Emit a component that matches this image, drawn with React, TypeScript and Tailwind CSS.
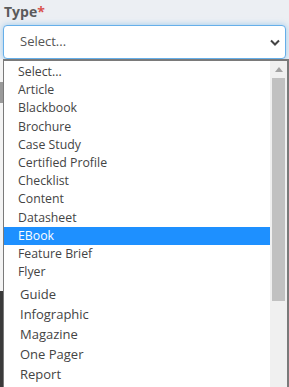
import React from 'react';

const firstGroup = [
  'Select...',
  'Article',
  'Blackbook',
  'Brochure',
  'Case Study',
  'Certified Profile',
  'Checklist',
  'Content',
  'Datasheet',
  'EBook',
  'Feature Brief',
  'Flyer',
];

const secondGroup = ['Guide', 'Infographic', 'Magazine', 'One Pager', 'Report'];

const App = () => {
  return (
    <div className="w-[289px] h-[387px] overflow-hidden bg-[#eceff3] font-['Open_Sans',sans-serif] text-[#444]">
      <div className="px-[3px] pt-[3px]">
        <div className="pl-[1px] text-[14px] font-bold leading-[18px] text-[#5b5b5b]">
          Type<span className="text-[#d9534f]">*</span>
        </div>
        <div className="mt-[4px] h-[34px] rounded-[4px] border border-[#66afe9] bg-white shadow-[0_0_6px_rgba(102,175,233,0.6)] flex items-center justify-between pl-[16px] pr-[5px]">
          <span className="text-[13px] text-[#555]">Select...</span>
          <svg width="10" height="7" viewBox="0 0 10 7" className="mt-[1px]">
            <path d="M1 1.5 L5 5.5 L9 1.5" fill="none" stroke="#444" strokeWidth="2" />
          </svg>
        </div>
      </div>

      <div className="flex">
        <div className="w-[3px] flex flex-col">
          <div className="h-[23px] bg-[#f4f4f4]" />
          <div className="h-[21px] bg-[#9a9a9a]" />
          <div className="h-[188px] bg-[#f4f4f4]" />
          <div className="flex-1 bg-[#3a3a3a]" />
        </div>
        <div className="flex-1 flex border-t-2 border-l border-r-2 border-[#7a7a7a] bg-white h-[330px]">
          <div className="flex-1 flex flex-col pt-[2px]">
            {firstGroup.map((item) => (
              <div
                key={item}
                className={`h-[18.2px] pl-[14px] text-[12.3px] leading-[18px] ${
                  item === 'EBook' ? 'bg-[#1e90ff] text-white' : 'text-[#444]'
                }`}
              >
                {item}
              </div>
            ))}
            <div className="flex flex-col pt-[3px]">
              {secondGroup.map((item) => (
                <div key={item} className="h-[20px] pl-[16px] text-[13px] leading-[20px] text-[#444]">
                  {item}
                </div>
              ))}
            </div>
          </div>
          <div className="w-[17px] bg-[#f0f0f0] flex flex-col items-center">
            <div className="h-[17px] flex items-center justify-center">
              <svg width="8" height="5" viewBox="0 0 8 5">
                <path d="M0 5 L4 0 L8 5 Z" fill="#a3a3a3" />
              </svg>
            </div>
            <div className="w-[13px] h-[223px] bg-[#c1c1c1]" />
          </div>
        </div>
      </div>
    </div>
  );
};

export default App;
